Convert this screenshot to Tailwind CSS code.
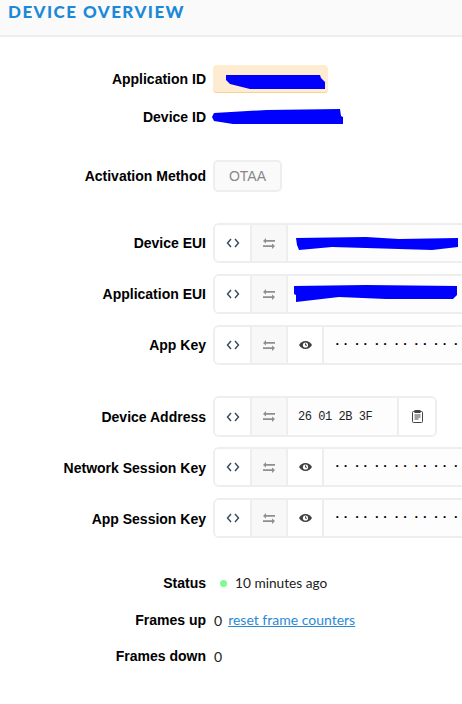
<!doctype html>
<html><head><meta charset="utf-8"><script src="https://cdn.jsdelivr.net/npm/@tailwindcss/browser@4"></script></head>
<body class="bg-white overflow-hidden">
<div class="w-[462px] h-[704px] overflow-hidden font-['Liberation_Sans',sans-serif] text-[14px] text-black">
  <div class="h-[37px] bg-[#fafafa] border-b-2 border-[#eeeeee] pl-[8px] pt-[1px]">
    <h1 class="font-['Lato',sans-serif] font-black text-[17px] leading-[21px] tracking-[1.45px] text-[#1c88d8] whitespace-nowrap">DEVICE OVERVIEW</h1>
  </div>

  <div class="flex items-center h-[28px] mt-[28px]">
    <div class="flex-none w-[206px] text-right font-bold">Application ID</div>
    <div class="ml-[7px] w-[115px] h-[28px] bg-[#feecd2] border-b border-[#fbd38d] rounded-[4px] relative">
      <svg class="absolute left-[13px] top-[8px]" width="100" height="18" viewBox="226 73 100 18"><path fill="#0000ff" d="M226 75L320 75L321 78L325 82L325 89L250 89L230 84L226 80Z"/></svg>
    </div>
  </div>
  <div class="flex items-center h-[28px] mt-[10px]">
    <div class="flex-none w-[206px] text-right font-bold">Device ID</div>
    <svg class="ml-[6px]" width="132" height="16" viewBox="212 109 132 16"><path fill="#0000ff" d="M214 113L267 110L340 109L341 116L343 117L343 124L233 124L214 121L212 117Z"/></svg>
  </div>

  <div class="flex items-center h-[32px] mt-[29px]">
    <div class="flex-none w-[206px] text-right font-bold">Activation Method</div>
    <div class="ml-[7px] w-[69px] h-[32px] bg-[#fafafa] border-2 border-[#eeeeee] rounded-[5px] text-[#888888] text-[14px] flex items-center justify-center">OTAA</div>
  </div>

  <div class="flex items-center h-[40px] mt-[31px]">
    <div class="flex-none w-[206px] text-right font-bold">Device EUI</div>
    <div class="ml-[7px] flex-none w-[300px] h-[40px] border-2 border-[#eeeeee] rounded-[6px] bg-[#fdfdfd] flex">
      <div class="w-[37px] bg-white border-r-2 border-[#eeeeee] flex items-center justify-center rounded-l-[4px]"><svg width="14" height="10" viewBox="0 0 14 10" fill="none" stroke="#33475b" stroke-width="1.4"><path d="M5 1L1.5 5L5 9M9 1L12.5 5L9 9"/></svg></div>
      <div class="w-[36px] bg-[#f8f8f8] border-r-2 border-[#eeeeee] flex items-center justify-center"><svg width="12" height="11" viewBox="0 0 12 11" fill="#8f8f8f"><path d="M3 0L3 2L12 2L12 3.8L3 3.8L3 5.6L0 2.9ZM9 5.4L12 8.1L9 11L9 9L0 9L0 7.2L9 7.2Z"/></svg></div>
      <div class="flex-1 flex items-center pl-[6px]"><svg width="166" height="15" viewBox="295 236 166 15"><path fill="#0000ff" d="M297 238L367 237L400 239L459 238L459 247L433 250L367 248L333 247L300 250L298 245Z"/></svg></div>
    </div>
  </div>

  <div class="flex items-center h-[40px] mt-[11px]">
    <div class="flex-none w-[206px] text-right font-bold">Application EUI</div>
    <div class="ml-[7px] flex-none w-[300px] h-[40px] border-2 border-[#eeeeee] rounded-[6px] bg-[#fdfdfd] flex">
      <div class="w-[37px] bg-white border-r-2 border-[#eeeeee] flex items-center justify-center rounded-l-[4px]"><svg width="14" height="10" viewBox="0 0 14 10" fill="none" stroke="#33475b" stroke-width="1.4"><path d="M5 1L1.5 5L5 9M9 1L12.5 5L9 9"/></svg></div>
      <div class="w-[36px] bg-[#f8f8f8] border-r-2 border-[#eeeeee] flex items-center justify-center"><svg width="12" height="11" viewBox="0 0 12 11" fill="#8f8f8f"><path d="M3 0L3 2L12 2L12 3.8L3 3.8L3 5.6L0 2.9ZM9 5.4L12 8.1L9 11L9 9L0 9L0 7.2L9 7.2Z"/></svg></div>
      <div class="flex-1 flex items-center pl-[6px]"><svg width="164" height="18" viewBox="295 285 164 18"><path fill="#0000ff" d="M295 286L367 285L458 286L458 295L454 299L387 299L340 297L297 302L297 295L295 294Z"/></svg></div>
    </div>
  </div>

  <div class="flex items-center h-[40px] mt-[11px]">
    <div class="flex-none w-[206px] text-right font-bold">App Key</div>
    <div class="ml-[7px] flex-none w-[300px] h-[40px] border-2 border-[#eeeeee] rounded-[6px] bg-[#fdfdfd] flex">
      <div class="w-[37px] bg-white border-r-2 border-[#eeeeee] flex items-center justify-center rounded-l-[4px]"><svg width="14" height="10" viewBox="0 0 14 10" fill="none" stroke="#33475b" stroke-width="1.4"><path d="M5 1L1.5 5L5 9M9 1L12.5 5L9 9"/></svg></div>
      <div class="w-[36px] bg-[#f8f8f8] border-r-2 border-[#eeeeee] flex items-center justify-center"><svg width="12" height="11" viewBox="0 0 12 11" fill="#8f8f8f"><path d="M3 0L3 2L12 2L12 3.8L3 3.8L3 5.6L0 2.9ZM9 5.4L12 8.1L9 11L9 9L0 9L0 7.2L9 7.2Z"/></svg></div>
      <div class="w-[36px] bg-white border-r-2 border-[#eeeeee] flex items-center justify-center"><svg width="13" height="10" viewBox="0 0 13 10"><path fill="#40403f" d="M6.5 1C3.5 1 1.2 3 0 5C1.2 7 3.5 9 6.5 9C9.5 9 11.8 7 13 5C11.8 3 9.5 1 6.5 1Z"/><circle cx="6.5" cy="5" r="2.6" fill="#fff"/><path d="M6.5 3.4V5.2H8" stroke="#40403f" fill="none"/></svg></div>
      <div class="flex-1 flex items-center pl-[10px] font-['DejaVu_Sans_Mono',monospace] font-bold text-[11px] tracking-[1.7px] [word-spacing:-5.2px] whitespace-nowrap">·· ·· ·· ·· ·· ·· ·</div>
    </div>
  </div>

  <div class="flex items-center h-[41px] mt-[31px]">
    <div class="flex-none w-[206px] pt-[1px] text-right font-bold">Device Address</div>
    <div class="ml-[7px] flex-none h-[41px] w-[224px] border-2 border-[#eeeeee] rounded-[6px] bg-[#fdfdfd] flex">
      <div class="w-[37px] bg-white border-r-2 border-[#eeeeee] flex items-center justify-center rounded-l-[4px]"><svg width="14" height="10" viewBox="0 0 14 10" fill="none" stroke="#33475b" stroke-width="1.4"><path d="M5 1L1.5 5L5 9M9 1L12.5 5L9 9"/></svg></div>
      <div class="w-[36px] bg-[#f8f8f8] border-r-2 border-[#eeeeee] flex items-center justify-center"><svg width="12" height="11" viewBox="0 0 12 11" fill="#8f8f8f"><path d="M3 0L3 2L12 2L12 3.8L3 3.8L3 5.6L0 2.9ZM9 5.4L12 8.1L9 11L9 9L0 9L0 7.2L9 7.2Z"/></svg></div>
      <div class="w-[111px] border-r-2 border-[#eeeeee] flex items-center pl-[10px] font-['Liberation_Mono',monospace] text-[12px] tracking-[-0.45px] text-[#222222] whitespace-nowrap">26 01 2B 3F</div>
      <div class="flex-1 bg-white rounded-r-[4px] flex items-center justify-center"><svg width="11" height="13" viewBox="0 0 11 13" fill="none" stroke="#444444"><rect x="0.5" y="1.5" width="10" height="11" rx="1"/><rect x="3" y="0.5" width="5" height="2" fill="#444444"/><path d="M2.5 5H8.5M2.5 7H8.5M2.5 9H6.5" /></svg></div>
    </div>
  </div>

  <div class="flex items-center h-[40px] mt-[10px]">
    <div class="flex-none w-[206px] pt-[2px] text-right font-bold">Network Session Key</div>
    <div class="ml-[7px] flex-none w-[300px] h-[40px] border-2 border-[#eeeeee] rounded-[6px] bg-[#fdfdfd] flex">
      <div class="w-[37px] bg-white border-r-2 border-[#eeeeee] flex items-center justify-center rounded-l-[4px]"><svg width="14" height="10" viewBox="0 0 14 10" fill="none" stroke="#33475b" stroke-width="1.4"><path d="M5 1L1.5 5L5 9M9 1L12.5 5L9 9"/></svg></div>
      <div class="w-[36px] bg-[#f8f8f8] border-r-2 border-[#eeeeee] flex items-center justify-center"><svg width="12" height="11" viewBox="0 0 12 11" fill="#8f8f8f"><path d="M3 0L3 2L12 2L12 3.8L3 3.8L3 5.6L0 2.9ZM9 5.4L12 8.1L9 11L9 9L0 9L0 7.2L9 7.2Z"/></svg></div>
      <div class="w-[36px] bg-white border-r-2 border-[#eeeeee] flex items-center justify-center"><svg width="13" height="10" viewBox="0 0 13 10"><path fill="#40403f" d="M6.5 1C3.5 1 1.2 3 0 5C1.2 7 3.5 9 6.5 9C9.5 9 11.8 7 13 5C11.8 3 9.5 1 6.5 1Z"/><circle cx="6.5" cy="5" r="2.6" fill="#fff"/><path d="M6.5 3.4V5.2H8" stroke="#40403f" fill="none"/></svg></div>
      <div class="flex-1 flex items-center pl-[10px] font-['DejaVu_Sans_Mono',monospace] font-bold text-[11px] tracking-[1.7px] [word-spacing:-5.2px] whitespace-nowrap">·· ·· ·· ·· ·· ·· ·</div>
    </div>
  </div>

  <div class="flex items-center h-[40px] mt-[11px]">
    <div class="flex-none w-[206px] pt-[2px] text-right font-bold">App Session Key</div>
    <div class="ml-[7px] flex-none w-[300px] h-[40px] border-2 border-[#eeeeee] rounded-[6px] bg-[#fdfdfd] flex">
      <div class="w-[37px] bg-white border-r-2 border-[#eeeeee] flex items-center justify-center rounded-l-[4px]"><svg width="14" height="10" viewBox="0 0 14 10" fill="none" stroke="#33475b" stroke-width="1.4"><path d="M5 1L1.5 5L5 9M9 1L12.5 5L9 9"/></svg></div>
      <div class="w-[36px] bg-[#f8f8f8] border-r-2 border-[#eeeeee] flex items-center justify-center"><svg width="12" height="11" viewBox="0 0 12 11" fill="#8f8f8f"><path d="M3 0L3 2L12 2L12 3.8L3 3.8L3 5.6L0 2.9ZM9 5.4L12 8.1L9 11L9 9L0 9L0 7.2L9 7.2Z"/></svg></div>
      <div class="w-[36px] bg-white border-r-2 border-[#eeeeee] flex items-center justify-center"><svg width="13" height="10" viewBox="0 0 13 10"><path fill="#40403f" d="M6.5 1C3.5 1 1.2 3 0 5C1.2 7 3.5 9 6.5 9C9.5 9 11.8 7 13 5C11.8 3 9.5 1 6.5 1Z"/><circle cx="6.5" cy="5" r="2.6" fill="#fff"/><path d="M6.5 3.4V5.2H8" stroke="#40403f" fill="none"/></svg></div>
      <div class="flex-1 flex items-center pl-[10px] font-['DejaVu_Sans_Mono',monospace] font-bold text-[11px] tracking-[1.7px] [word-spacing:-5.2px] whitespace-nowrap">·· ·· ·· ·· ·· ·· ·</div>
    </div>
  </div>

  <div class="flex items-center h-[24px] mt-[33px]">
    <div class="flex-none w-[206px] text-right font-bold">Status</div>
    <span class="ml-[14px] w-[7px] h-[7px] rounded-full bg-[#7dfc8f]"></span>
    <span class="ml-[8px] font-['Lato',sans-serif] text-[13.7px] text-[#222222]">10 minutes ago</span>
  </div>
  <div class="flex items-center h-[24px] mt-[13px]">
    <div class="flex-none w-[206px] text-right font-bold">Frames up</div>
    <span class="ml-[8px] font-['Lato',sans-serif] text-[14px] text-[#222222]">0</span>
    <a class="ml-[6px] mb-[1px] font-['Lato',sans-serif] text-[14px] text-[#2b8ad6] underline">reset frame counters</a>
  </div>
  <div class="flex items-center h-[24px] mt-[12px]">
    <div class="flex-none w-[206px] text-right font-bold">Frames down</div>
    <span class="ml-[8px] font-['Lato',sans-serif] text-[14px] text-[#222222]">0</span>
  </div>
</div>
</body></html>
